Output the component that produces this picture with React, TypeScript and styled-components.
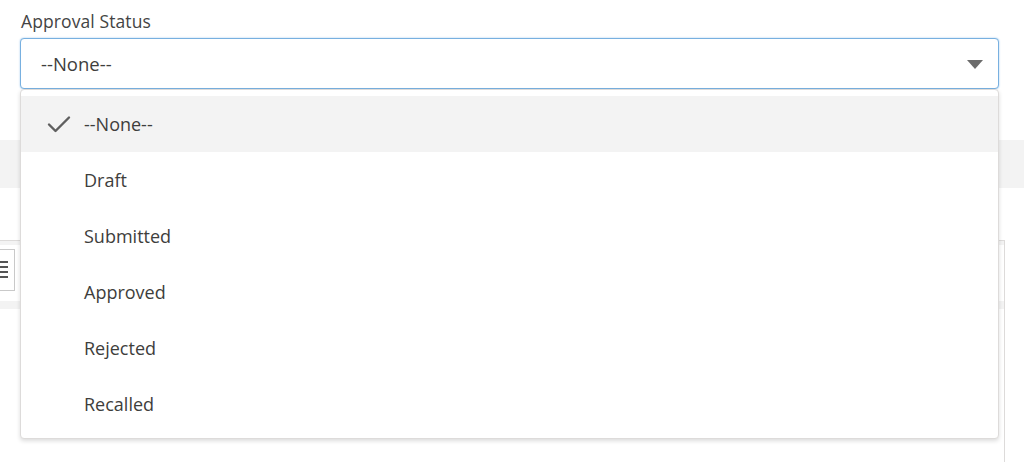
import React, { useState } from 'react';
import styled, { createGlobalStyle } from 'styled-components';

const GlobalStyle = createGlobalStyle`
  html, body {
    margin: 0;
    padding: 0;
    background: #ffffff;
  }
  body {
    font-family: 'Open Sans', 'Noto Sans', Arial, sans-serif;
    color: #3e3e3c;
    overflow: hidden;
  }
`;

const Page = styled.div`
  position: relative;
  width: 1024px;
  height: 462px;
  overflow: hidden;
`;

const Field = styled.div`
  padding: 9px 25px 0 20px;
`;

const Label = styled.label`
  display: block;
  font-size: 17.5px;
  line-height: 24px;
  color: #444444;
  padding-left: 1px;
  margin-bottom: 5px;
  letter-spacing: 0.1px;
`;

const Combobox = styled.div`
  position: relative;
  z-index: 2;
`;

const Trigger = styled.button`
  width: 100%;
  height: 51px;
  display: flex;
  align-items: center;
  justify-content: space-between;
  padding: 0 15px 0 20px;
  box-sizing: border-box;
  background: #ffffff;
  border: 1px solid #78b0e0;
  border-radius: 4px;
  box-shadow: 0 0 2px #9cc6ec;
  font: inherit;
  font-size: 18.5px;
  color: #3e3e3c;
  cursor: pointer;
`;

const Caret = styled.span`
  width: 0;
  height: 0;
  border-left: 8px solid transparent;
  border-right: 8px solid transparent;
  border-top: 9px solid #6b6b6b;
  margin-top: 2px;
`;

const Listbox = styled.ul`
  position: absolute;
  top: 100%;
  left: 0;
  right: 0;
  margin: 0;
  padding: 6px 0 6px;
  list-style: none;
  background: #ffffff;
  border: 1px solid #dddbda;
  border-radius: 4px;
  box-shadow: 0 2px 4px rgba(0, 0, 0, 0.14);
`;

const Option = styled.li<{ $active: boolean }>`
  height: 56px;
  display: flex;
  align-items: center;
  padding-left: 26px;
  font-size: 18px;
  color: #3e3e3c;
  background: ${(p) => (p.$active ? '#f3f3f3' : 'transparent')};
  cursor: pointer;
`;

const CheckSlot = styled.span`
  width: 37px;
  display: flex;
  align-items: center;
`;

const Band = styled.div`
  margin-top: 51px;
  height: 48px;
  background: #f3f3f3;
`;

const Editor = styled.div`
  margin-top: 52px;
  margin-right: 19px;
  height: 240px;
  border: 1px solid #dddbda;
  border-left: none;
  box-sizing: border-box;
`;

const Toolbar = styled.div`
  display: flex;
  padding: 4px 0 10px;
  border-top: 4px solid #f3f3f3;
  border-bottom: 8px solid #f3f3f3;
`;

const ToolButton = styled.div`
  width: 14px;
  height: 40px;
  display: flex;
  align-items: center;
  justify-content: flex-start;
  border: 1px solid #c9c9c9;
  border-left: none;
`;

const Check = () => (
  <svg width="24" height="18" viewBox="0 0 24 18" fill="none">
    <path d="M2 9.5 L8.5 16 L22 2.5" stroke="#5f5f5f" strokeWidth="2.4" strokeLinecap="round" strokeLinejoin="round" />
  </svg>
);

const Lines = () => (
  <svg width="9" height="18" viewBox="0 0 9 18">
    {[1, 6, 11, 16].map((y) => (
      <rect key={y} x="0" y={y - 1} width="8" height="2" fill="#555" />
    ))}
  </svg>
);

const options = ['--None--', 'Draft', 'Submitted', 'Approved', 'Rejected', 'Recalled'];

export default function App() {
  const [value, setValue] = useState('--None--');
  return (
    <Page>
      <GlobalStyle />
      <Field>
        <Label>Approval Status</Label>
        <Combobox>
          <Trigger type="button">
            <span>{value}</span>
            <Caret />
          </Trigger>
          <Listbox role="listbox">
            {options.map((o) => (
              <Option key={o} $active={o === value} onClick={() => setValue(o)}>
                <CheckSlot>{o === value && <Check />}</CheckSlot>
                {o}
              </Option>
            ))}
          </Listbox>
        </Combobox>
      </Field>
      <Band />
      <Editor>
        <Toolbar>
          <ToolButton>
            <Lines />
          </ToolButton>
        </Toolbar>
      </Editor>
    </Page>
  );
}
